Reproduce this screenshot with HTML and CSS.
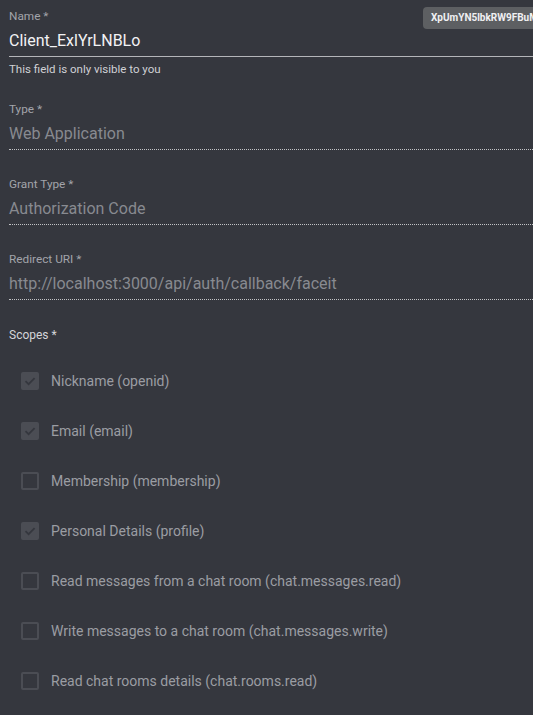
FILE: index.html
```html
<!DOCTYPE html>
<html lang="en">
<head>
<meta charset="utf-8">
<title>Client</title>
<link rel="stylesheet" href="styles.css">
</head>
<body>
<form class="form">
  <div class="field field-name">
    <label class="label">Name *</label>
    <div class="input input-active">Client_ExlYrLNBLo</div>
    <div class="helper">This field is only visible to you</div>
    <span class="badge">XpUmYN5lbkRW9FBuMzQ1aT0</span>
  </div>
  <div class="field">
    <label class="label">Type *</label>
    <div class="input input-disabled">Web Application</div>
  </div>
  <div class="field">
    <label class="label">Grant Type *</label>
    <div class="input input-disabled">Authorization Code</div>
  </div>
  <div class="field">
    <label class="label">Redirect URI *</label>
    <div class="input input-disabled">http://localhost:3000/api/auth/callback/faceit</div>
  </div>
  <div class="scopes">
    <div class="scopes-label">Scopes *</div>
    <ul class="scope-list">
      <li class="scope"><span class="box checked"><svg viewBox="0 0 18 18"><path d="M4.5 9.2 L7.6 12.2 L13.6 6.2"/></svg></span><span class="scope-text">Nickname (openid)</span></li>
      <li class="scope"><span class="box checked"><svg viewBox="0 0 18 18"><path d="M4.5 9.2 L7.6 12.2 L13.6 6.2"/></svg></span><span class="scope-text">Email (email)</span></li>
      <li class="scope"><span class="box"></span><span class="scope-text">Membership (membership)</span></li>
      <li class="scope"><span class="box checked"><svg viewBox="0 0 18 18"><path d="M4.5 9.2 L7.6 12.2 L13.6 6.2"/></svg></span><span class="scope-text">Personal Details (profile)</span></li>
      <li class="scope"><span class="box"></span><span class="scope-text">Read messages from a chat room (chat.messages.read)</span></li>
      <li class="scope"><span class="box"></span><span class="scope-text">Write messages to a chat room (chat.messages.write)</span></li>
      <li class="scope"><span class="box"></span><span class="scope-text">Read chat rooms details (chat.rooms.read)</span></li>
    </ul>
  </div>
</form>
</body>
</html>
```
FILE: styles.css
```css
html, body {
  margin: 0;
  padding: 0;
  background: #35373e;
  overflow: hidden;
}
body {
  font-family: Roboto, "Liberation Sans", sans-serif;
  width: 533px;
  height: 715px;
}
.form {
  padding: 10px 0 0 9px;
}
.field {
  position: relative;
  margin-bottom: 28px;
}
.field-name {
  margin-bottom: 27px;
}
.label {
  display: block;
  font-size: 11.8px;
  line-height: 13px;
  color: #a2a4aa;
}
.input {
  margin-top: 8px;
  font-size: 16px;
  line-height: 20px;
  padding-bottom: 5px;
  white-space: nowrap;
}
.input-active {
  margin-top: 8px;
  padding-bottom: 5px;
  color: #f2f2f4;
  border-bottom: 1px solid #b4b5b9;
}
.input-disabled {
  color: #888a90;
  border-bottom: 1px dotted #c2c3c6;
}
.helper {
  margin-top: 5px;
  font-size: 11.5px;
  line-height: 14px;
  color: #d0d1d5;
}
.badge {
  position: absolute;
  left: 414px;
  top: -3px;
  height: 22px;
  line-height: 22px;
  padding: 0 8px;
  border-radius: 4px;
  background: #5d5f62;
  color: #f0f0f2;
  font-size: 10px;
  font-weight: bold;
  white-space: nowrap;
}
.scopes-label {
  font-size: 12px;
  line-height: 14px;
  color: #d4d5d9;
}
.scope-list {
  list-style: none;
  margin: 14px 0 0;
  padding: 0;
}
.scope {
  height: 50px;
  display: flex;
  align-items: center;
  gap: 12px;
  padding-left: 12px;
}
.box {
  width: 18px;
  height: 18px;
  box-sizing: border-box;
  border: 2px solid #4b4d54;
  border-radius: 2px;
  flex: none;
  display: flex;
}
.box.checked {
  background: #4b4d54;
}
.box svg {
  width: 18px;
  height: 18px;
  margin: -2px;
  fill: none;
  stroke: #35373e;
  stroke-width: 1.8;
}
.scope-text {
  font-size: 14px;
  line-height: 16px;
  margin-top: -1px;
  color: #9b9da3;
  white-space: nowrap;
}
```
